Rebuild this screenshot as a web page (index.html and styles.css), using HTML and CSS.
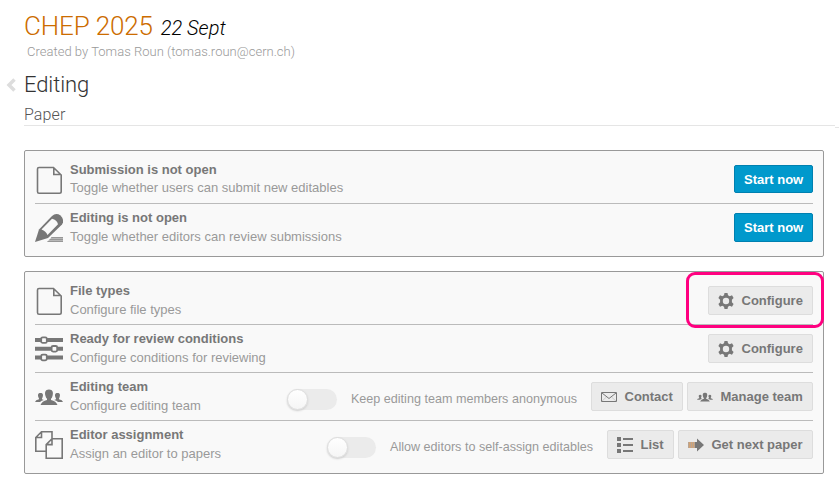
FILE: index.html
```html
<!DOCTYPE html>
<html lang="en">
<head>
<meta charset="utf-8">
<title>CHEP 2025 - Editing</title>
<link rel="stylesheet" href="styles.css">
</head>
<body>
<svg class="symbols" aria-hidden="true">
  <symbol id="file" viewBox="0 0 28 28"><path d="M4 1.500H18.500L26.200 9V25.500Q26.200 27.200 24.500 27.200H4Q2.500 27.200 2.500 25.500V3Q2.500 1.500 4 1.500ZM18.800 1.500V8.500H26" fill="none" stroke="currentColor" stroke-width="1.600"/></symbol>
  <symbol id="pencil" viewBox="0 0 28 28"><path d="M0 28L4 15.500L17 2Q21-1.500 25.500 1.500Q30 6 27 10.500L13 24Z" fill="currentColor"/><path d="M6.500 15.500L17 4.800Q22 6 23 10.300L12.500 21Q11 17 6.500 15.500Z" fill="#f9f9f9"/><path d="M17 23H28V28H12Z" fill="currentColor" opacity=".5"/><path d="M16 23.500H28M14.500 25.500H28M12.500 27.500H28" stroke="currentColor" stroke-width="1" opacity=".5"/></symbol>
  <symbol id="sliders" viewBox="0 0 28 28"><path d="M0 5H28M0 13.700H28M0 22.500H28" stroke="currentColor" stroke-width="4"/><g fill="#f9f9f9" stroke="currentColor" stroke-width="1.800"><rect x="6.200" y="2.300" width="5.600" height="5.600" rx="1.500"/><rect x="16.600" y="11" width="5.600" height="5.600" rx="1.500"/><rect x="6.200" y="19.700" width="5.600" height="5.600" rx="1.500"/></g></symbol>
  <symbol id="users" viewBox="0 0 28 28"><g fill="currentColor"><path d="M14 6.500C18 6.500 18.500 9.500 17.500 13Q17 15 16 15.700V17Q21 18 22.500 22H5.500Q7 18 12 17V15.700Q11 15 10.500 13C9.500 9.500 10 6.500 14 6.500Z"/><path d="M5.500 10C8 10 8.500 12 7.500 14.500L7 15.500V16.300L8.800 17Q6.500 17.500 5 19H0Q.5 17 4 16.300V15.500L3.500 14.500C2.500 12 3 10 5.500 10ZM22.500 10C20 10 19.500 12 20.500 14.500L21 15.500V16.300L19.200 17Q21.500 17.500 23 19H28Q27.500 17 24 16.300V15.500L24.500 14.500C25.500 12 25 10 22.500 10Z"/></g></symbol>
  <symbol id="copy" viewBox="0 0 28 28"><path d="M11 20.200H.8V6.500L6.500 .8H17V7.800M6.500 1V6.500H1M17 7.800H27.200V27.200H11.200V13.600ZM17 8V13.600H11.500" fill="none" stroke="currentColor" stroke-width="1.600"/></symbol>
  <symbol id="gear" viewBox="0 0 16 16"><path fill="currentColor" fill-rule="evenodd" d="M6.500 0H9.500L10 2.300L11.700 3.200L14 2.200L15.600 5L13.900 6.700V9.300L15.600 11L14 13.800L11.700 12.800L10 13.700L9.500 16H6.500L6 13.700L4.300 12.800L2 13.800L.4 11L2.100 9.300V6.700L.4 5L2 2.200L4.300 3.200L6 2.300ZM8 4.800A3.200 3.200 0 1 0 8 11.200A3.200 3.200 0 1 0 8 4.800Z"/></symbol>
  <symbol id="mail" viewBox="0 0 16 16"><path d="M.5 3.500H15.500V12.500H.5Z" fill="none" stroke="currentColor"/><path d="M1 4L8 9.500L15 4" fill="none" stroke="currentColor"/><path d="M1 12L5.500 8M15 12L10.500 8" stroke="currentColor" stroke-width=".5" opacity=".5"/></symbol>
  <symbol id="list" viewBox="0 0 16 16"><path d="M0 0H4V4H0ZM0 6H4V10H0ZM0 12H4V16H0ZM6 1H16V3H6ZM6 7H16V9H6ZM6 13H16V15H6Z" fill="currentColor"/></symbol>
  <symbol id="next" viewBox="0 0 16 16"><path d="M7 5H9V1.500L16 8L9 14.500V11H7Z" fill="currentColor"/><path d="M0 5H7V11H0Z" fill="#b9a492"/><path d="M1.500 5V11M3.500 5V11M5.500 5V11" stroke="#d0a377"/></symbol>
</svg>
<header>
  <h1><span class="event">CHEP 2025</span><span class="date">22 Sept</span></h1>
  <p class="author">Created by Tomas Roun (tomas.roun@cern.ch)</p>
</header>
<div class="page-title">
  <svg class="back" viewBox="0 0 10 14"><path d="M8.500 1.500L3 7L8.500 12.500" fill="none" stroke="currentColor" stroke-width="3.500"/></svg>
  <h2>Editing</h2>
</div>
<div class="subtitle"><h3>Paper</h3><i class="rule-end"></i></div>
<main>
  <section class="panel">
    <div class="row compact">
      <svg class="icon"><use href="#file"/></svg>
      <div class="label"><strong>Submission is not open</strong><span>Toggle whether users can submit new editables</span></div>
      <button class="btn primary short">Start now</button>
    </div>
    <div class="row">
      <svg class="icon"><use href="#pencil"/></svg>
      <div class="label"><strong>Editing is not open</strong><span>Toggle whether editors can review submissions</span></div>
      <button class="btn primary">Start now</button>
    </div>
  </section>
  <section class="panel">
    <div class="row">
      <svg class="icon"><use href="#file"/></svg>
      <div class="label"><strong>File types</strong><span>Configure file types</span></div>
      <button class="btn configure"><svg><use href="#gear"/></svg>Configure</button>
      <div class="highlight"></div>
    </div>
    <div class="row">
      <svg class="icon"><use href="#sliders"/></svg>
      <div class="label"><strong>Ready for review conditions</strong><span>Configure conditions for reviewing</span></div>
      <button class="btn configure"><svg><use href="#gear"/></svg>Configure</button>
    </div>
    <div class="row">
      <svg class="icon"><use href="#users"/></svg>
      <div class="label"><strong>Editing team</strong><span>Configure editing team</span></div>
      <div class="toggle"><i></i></div><span class="toggle-label">Keep editing team members anonymous</span>
      <button class="btn contact"><svg><use href="#mail"/></svg>Contact</button>
      <button class="btn manage"><svg><use href="#users"/></svg>Manage team</button>
    </div>
    <div class="row">
      <svg class="icon"><use href="#copy"/></svg>
      <div class="label"><strong>Editor assignment</strong><span>Assign an editor to papers</span></div>
      <div class="toggle narrow"><i></i></div><span class="toggle-label">Allow editors to self-assign editables</span>
      <button class="btn list"><svg><use href="#list"/></svg>List</button>
      <button class="btn get-next"><svg><use href="#next"/></svg>Get next paper</button>
    </div>
  </section>
</main>
</body>
</html>
```
FILE: styles.css
```css
* { box-sizing: border-box; }
body { margin: 0; background: #fff; color: #777; font: 13px/18px "Liberation Sans", Arial, sans-serif; overflow: hidden; }
h1, h2, h3, p { margin: 0; font-family: Roboto, sans-serif; font-weight: 300; }
.symbols { display: none; }
header { padding: 10px 0 0 24px; height: 70px; }
h1 { display: flex; align-items: baseline; gap: 8px; line-height: 32px; }
.event { color: #cc6c00; font-size: 26px; letter-spacing: -.15px; }
.date { color: #000; font-size: 20px; font-style: italic; }
.author { padding-left: 3px; margin-top: -1px; color: #999; font-size: 13px; line-height: 18px; letter-spacing: .02px; }
.page-title { display: flex; align-items: center; height: 30px; padding-left: 6px; }
.back { width: 10px; height: 14px; margin-right: 8px; color: #ddd; }
h2 { color: #333; font-size: 22px; line-height: 30px; letter-spacing: -.1px; }
.subtitle { display: flex; align-items: flex-end; height: 28px; padding-left: 24px; }
h3 { width: 811px; height: 26px; margin-bottom: 2px; border-bottom: 1px solid #e5e5e5; color: #555; font-size: 16px; line-height: 29px; letter-spacing: .1px; }
.rule-end { width: 4px; height: 1px; background: #e5e5e5; }
main { display: flex; flex-direction: column; gap: 14px; width: 800px; margin: 22px 0 0 24px; }
.panel { padding: 10px; border: 1px solid #999; border-radius: 2px; background: #f9f9f9; }
.row { position: relative; display: flex; align-items: flex-start; height: 48px; padding-top: 5px; border-bottom: 1px solid #bbb; }
.row:first-child { height: 43px; padding-top: 0; }
.row:last-child { height: 42px; border: 0; }
.icon { flex: none; width: 28px; height: 28px; margin: 5px 7px 0 0; color: #777; }
.label { display: flex; flex-direction: column; flex: 1; white-space: nowrap; }
.label strong { height: 19px; }
.compact strong { height: 18px; }
.label span, .toggle-label { color: #999; }
.btn { display: flex; align-items: center; flex: none; height: 29px; margin-top: 4px; padding: 0 9px; border: 1px solid #ddd; border-radius: 2px; background: #ebebeb; color: #777; font: bold 13px/18px "Liberation Sans", Arial, sans-serif; white-space: nowrap; }
.btn svg { width: 16px; height: 16px; margin-right: 7.5px; }
.btn + .btn { margin-left: 4px; }
.primary { width: 79px; border-color: #0080b0; background: #0099cc; color: #fff; }
.short { height: 28px; padding-top: 1px; }
.configure { width: 105px; }
.contact { width: 92px; }
.manage { width: 126px; }
.list { width: 67px; }
.get-next { width: 135px; }
.toggle { flex: none; width: 50px; height: 21px; margin: 11px 14px 0 0; border-radius: 11px; background: #ebebeb; }
.narrow { width: 49px; }
.toggle i { display: block; width: 21px; height: 21px; border: 1px solid #ddd; border-radius: 50%; background: linear-gradient(#fff, #f5f5f5); box-shadow: 0 1px 2px #ccc; }
.toggle-label { margin: 12px 14px 0 0; font-size: 12.6px; white-space: nowrap; }
.highlight { position: absolute; left: 651px; top: -10px; width: 138px; height: 56px; border: 3px solid #ff0080; border-radius: 9px; z-index: 1; }
```
